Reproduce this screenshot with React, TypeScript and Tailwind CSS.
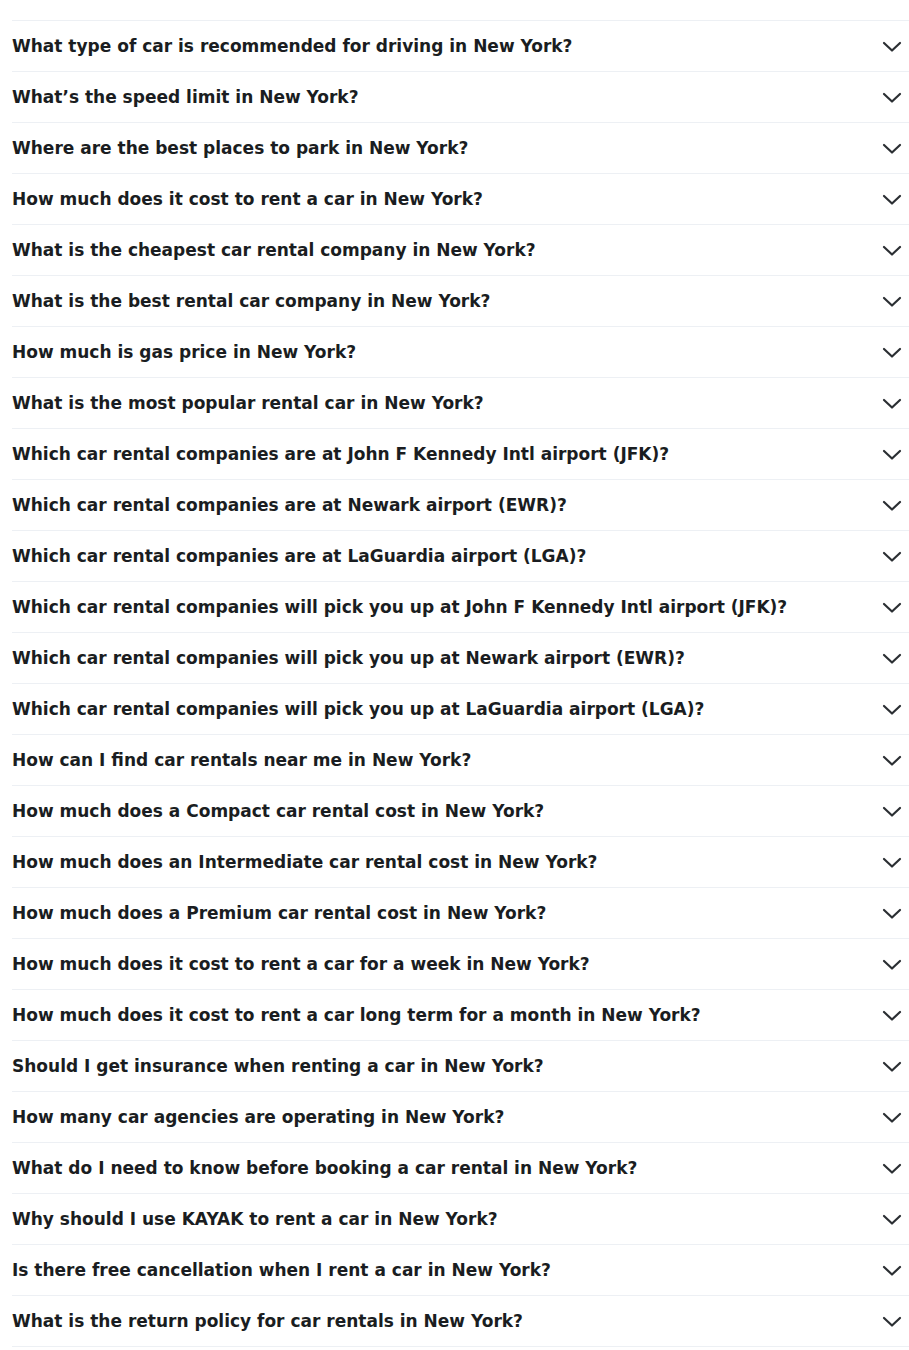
import React from "react";

const questions = [
  "What type of car is recommended for driving in New York?",
  "What\u2019s the speed limit in New York?",
  "Where are the best places to park in New York?",
  "How much does it cost to rent a car in New York?",
  "What is the cheapest car rental company in New York?",
  "What is the best rental car company in New York?",
  "How much is gas price in New York?",
  "What is the most popular rental car in New York?",
  "Which car rental companies are at John F Kennedy Intl airport (JFK)?",
  "Which car rental companies are at Newark airport (EWR)?",
  "Which car rental companies are at LaGuardia airport (LGA)?",
  "Which car rental companies will pick you up at John F Kennedy Intl airport (JFK)?",
  "Which car rental companies will pick you up at Newark airport (EWR)?",
  "Which car rental companies will pick you up at LaGuardia airport (LGA)?",
  "How can I find car rentals near me in New York?",
  "How much does a Compact car rental cost in New York?",
  "How much does an Intermediate car rental cost in New York?",
  "How much does a Premium car rental cost in New York?",
  "How much does it cost to rent a car for a week in New York?",
  "How much does it cost to rent a car long term for a month in New York?",
  "Should I get insurance when renting a car in New York?",
  "How many car agencies are operating in New York?",
  "What do I need to know before booking a car rental in New York?",
  "Why should I use KAYAK to rent a car in New York?",
  "Is there free cancellation when I rent a car in New York?",
  "What is the return policy for car rentals in New York?",
];

function Chevron() {
  return (
    <svg width="20" height="12" viewBox="0 0 20 12" fill="none" className="shrink-0">
      <path d="M2 2 L10 9.5 L18 2" stroke="#2b2f33" strokeWidth="2.2" strokeLinecap="round" strokeLinejoin="round" />
    </svg>
  );
}

export default function App() {
  return (
    <div className="w-[909px] min-h-[1350px] bg-white pt-5 pl-3" style={{ fontFamily: "'DejaVu Sans', sans-serif" }}>
      <div className="border-t border-[#edf0f4]">
        {questions.map((q) => (
          <div key={q} className="h-[51px] flex items-center justify-between pt-[2px] pr-[7px] border-b border-[#edf0f4]">
            <span className="text-[17px] font-bold text-[#1a1d21]">{q}</span>
            <Chevron />
          </div>
        ))}
      </div>
    </div>
  );
}
